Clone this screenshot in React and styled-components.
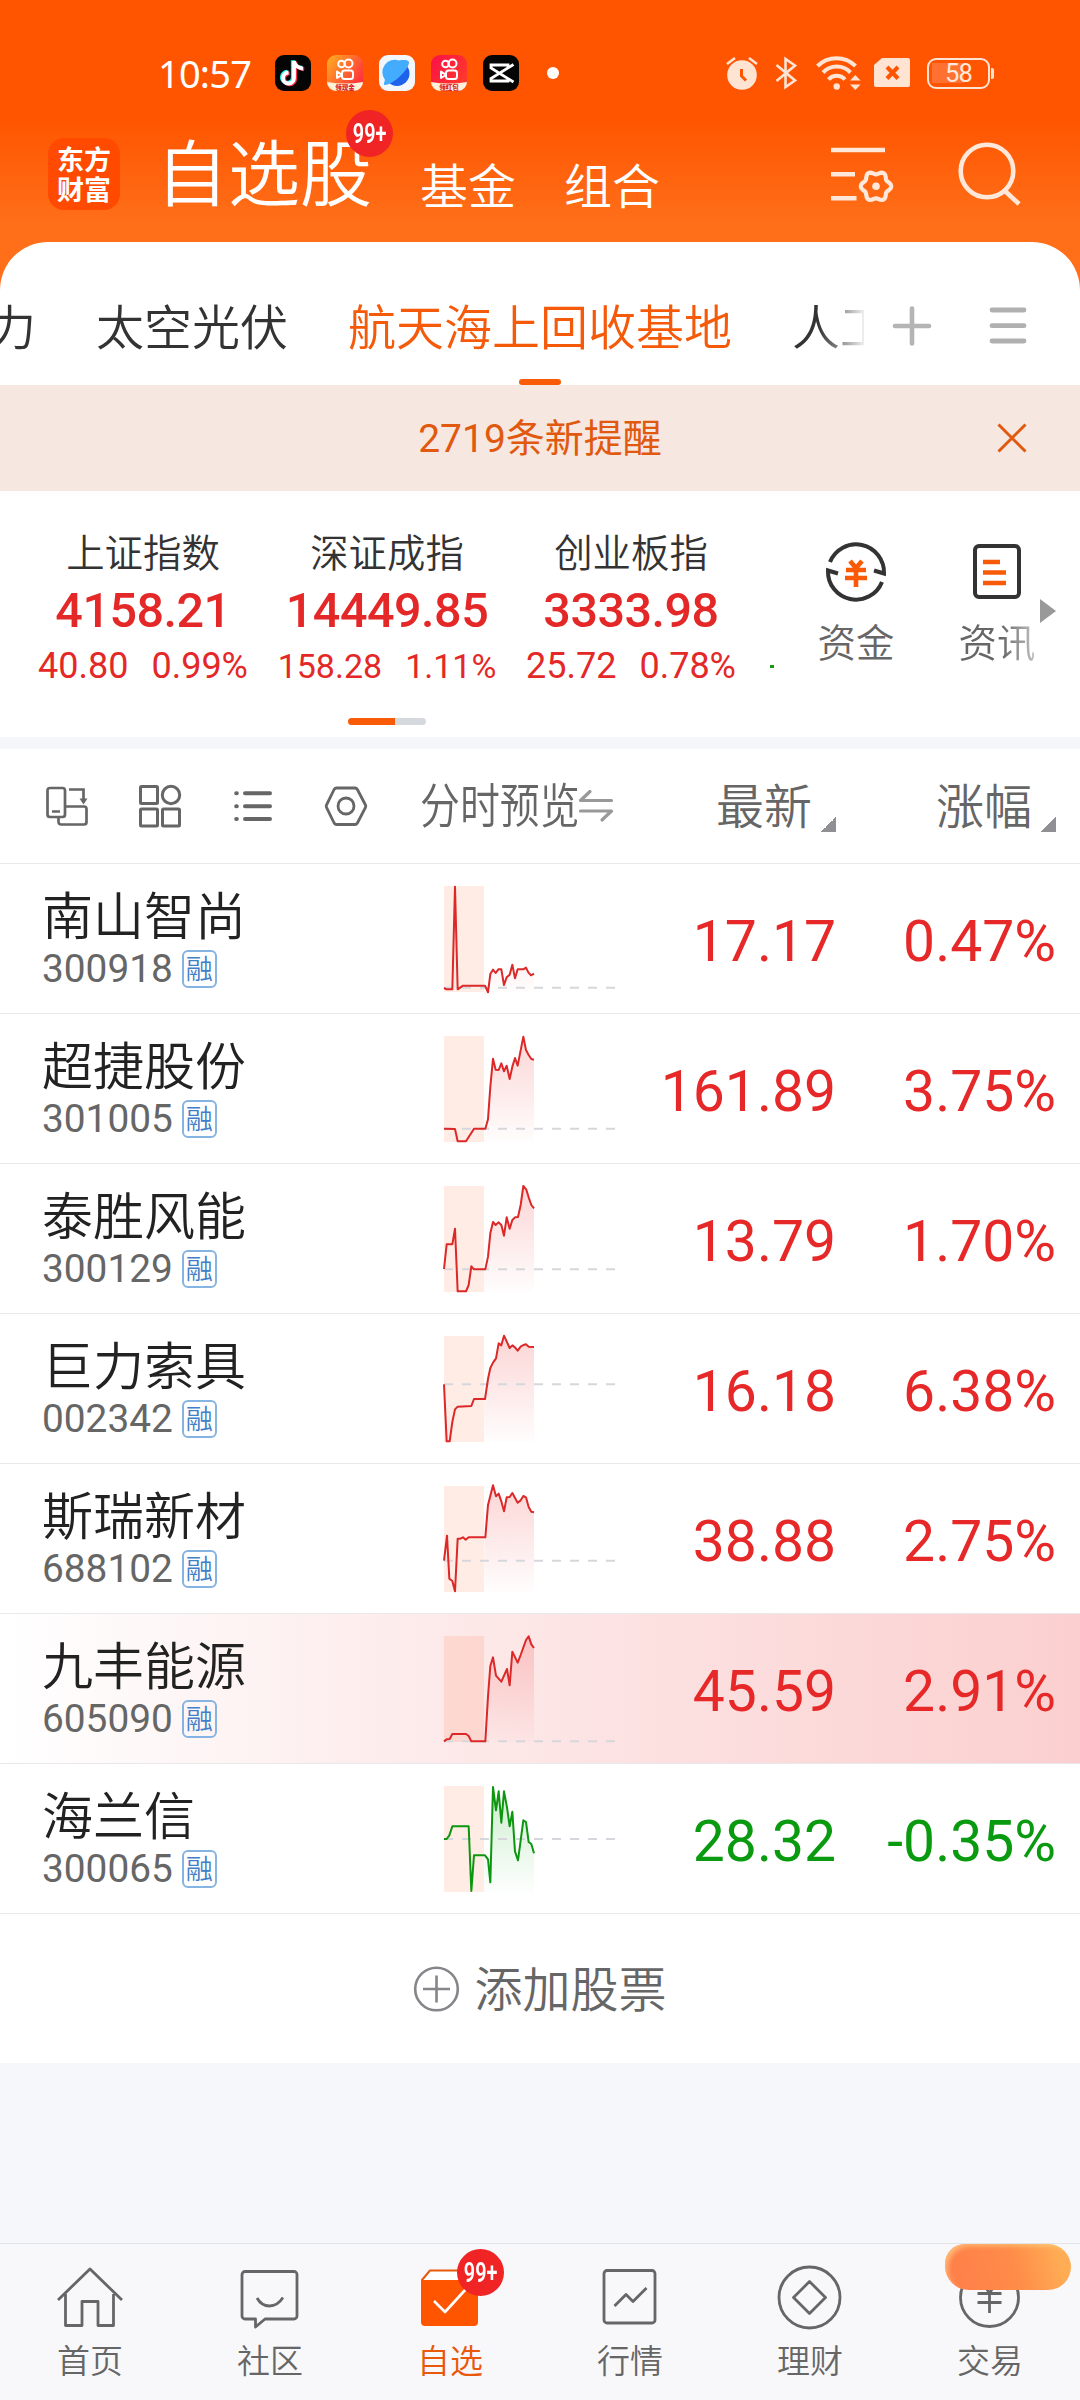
import React from 'react';
import styled, { createGlobalStyle, css } from 'styled-components';

const GlobalStyle = createGlobalStyle`
  * { box-sizing: border-box; }
  body { margin: 0; background: #f6f7fa; }
  svg { display: block; flex: none; overflow: visible; }
`;

const cjk = css`
  font-family: Roboto, "Noto Sans CJK SC", sans-serif;
  font-weight: 350;
`;

const Screen = styled.main`
  width: 1080px;
  height: 2400px;
  overflow: hidden;
  display: flex;
  flex-direction: column;
  background: #f6f7fa;
  font-family: Roboto, "Noto Sans CJK SC", sans-serif;
  color: #222;
  white-space: nowrap;
`;

const Top = styled.header`
  height: 385px;
  background: linear-gradient(#ff5500 0, #ff5500 118px, #ff6f1a 225px, #ff6f1a 100%);
`;

/* ---------- status bar ---------- */
const StatusBar = styled.div`
  height: 114px;
  padding: 32px 86px 0 158px;
  display: flex;
  align-items: center;
  color: #fff;
`;
const Clock = styled.span`
  width: 117px;
  font: 450 38px/40px "Noto Sans", sans-serif;
  letter-spacing: -0.8px;
`;
const AppIcons = styled.div`
  display: flex;
  gap: 16px;
`;
const Dot = styled.i`
  width: 12px;
  height: 12px;
  margin-left: 28px;
  border-radius: 50%;
  background: #fff;
`;
const StatusIcons = styled.div`
  margin-left: auto;
  display: flex;
  align-items: center;
`;
const Gap = styled.i`
  width: ${(p) => p.$w}px;
`;
const Battery = styled.div`
  width: 63px;
  height: 31px;
  padding: 3px;
  border: 2.5px solid #ffe3d3;
  border-radius: 9px;
  display: flex;
  justify-content: center;
  align-items: center;
  background: linear-gradient(#ff7130, #ff7130) 3px 3px / 32px 20px no-repeat;
  font: 400 25.5px/26px Roboto, sans-serif;
  letter-spacing: -0.8px;
  color: #ffe9dd;
`;
const BatteryTip = styled.i`
  width: 3px;
  height: 11px;
  margin-left: 1px;
  border-radius: 0 2px 2px 0;
  background: #ffe3d3;
`;

/* ---------- title row ---------- */
const TitleRow = styled.div`
  height: 128px;
  padding: 0 58px 0 48px;
  display: flex;
  align-items: flex-start;
  color: #fff;
`;
const Logo = styled.div`
  width: 72px;
  height: 72px;
  margin: 24px 36px 0 0;
  padding-top: 6px;
  border-radius: 16px;
  background: #ff4a00;
  text-align: center;
  font: 700 27px/29.5px "Noto Sans CJK SC", sans-serif;
`;
const MainTitle = styled.h1`
  ${cjk}
  position: relative;
  margin: 26px 48px 0 0;
  font-size: 72px;
  line-height: 72px;
`;
const TitleLink = styled.span`
  ${cjk}
  margin: 50px 48px 0 0;
  font-size: 48px;
  line-height: 48px;
`;
const Badge = styled.span`
  position: absolute;
  left: ${(p) => p.$x}px;
  top: ${(p) => p.$y}px;
  width: 47px;
  height: 47px;
  border-radius: 50%;
  background: #f02424;
  color: #fff;
  display: flex;
  align-items: center;
  justify-content: center;
  font: 600 28px/47px Roboto, sans-serif;
  & > b { font-weight: 600; transform: scaleX(0.71); }
`;
const TitleActions = styled.div`
  margin: 32px 0 0 auto;
  display: flex;
  gap: 63px;
`;

/* ---------- group tabs ---------- */
const TabSheet = styled.nav`
  height: 143px;
  border-radius: 48px 48px 0 0;
  background: #fff;
  display: flex;
`;
const TabScroller = styled.div`
  ${cjk}
  width: 864px;
  overflow: hidden;
  display: flex;
  gap: 60px;
  mask-image: linear-gradient(90deg, #000 818px, transparent 868px);
`;
const Tab = styled.div`
  flex: none;
  height: 143px;
  padding-top: 63px;
  display: flex;
  flex-direction: column;
  align-items: center;
  justify-content: space-between;
  font-size: 48px;
  line-height: 48px;
  color: ${(p) => (p.$active ? '#f55a0a' : '#333')};
  &:first-child { margin-left: -12px; }
`;
const TabMark = styled.i`
  width: 42px;
  height: 6px;
  border-radius: 3px;
  background: #f85a08;
`;
const TabTools = styled.div`
  padding: 63px 0 0 28px;
  display: flex;
  gap: 56px;
`;

/* ---------- notice ---------- */
const Notice = styled.div`
  height: 106px;
  padding: 0 52px;
  background: #f6e7e0;
  display: grid;
  grid-template-columns: 31px 1fr 31px;
  align-items: center;
  text-align: center;
  color: #e0590f;
  font-size: 39px;
  line-height: 50px;
  & > span { grid-column: 2; padding-top: 2px; }
`;

/* ---------- indices ---------- */
const IndexPanel = styled.section`
  height: 246px;
  background: #fff;
  display: flex;
`;
const IndexMain = styled.div`
  width: 775px;
  padding-left: 21px;
`;
const IndexList = styled.div`
  height: 227px;
  padding-top: 39px;
  display: flex;
  color: #e42828;
`;
const IndexCard = styled.div`
  width: 244px;
  display: flex;
  flex-direction: column;
  align-items: center;
`;
const IndexName = styled.div`
  ${cjk}
  height: 48px;
  font-size: 38.4px;
  line-height: 48px;
  color: #333;
`;
const IndexValue = styled.div`
  height: 65px;
  font: 500 48.5px/66px Roboto, sans-serif;
  letter-spacing: -0.5px;
`;
const IndexChange = styled.div`
  height: 44px;
  display: flex;
  gap: 23px;
  font: 400 ${(p) => p.$size}px/44px Roboto, sans-serif;
  padding-top: 1px;
`;
const NextMark = styled.i`
  width: 4px;
  height: 3px;
  margin: 135px 0 0 17px;
  background: #159a15;
`;
const Pager = styled.div`
  width: 78px;
  height: 7px;
  margin-left: 327px;
  border-radius: 4px;
  background: linear-gradient(90deg, #f85a08 47px, #d5d8dd 47px);
`;
const Shortcuts = styled.div`
  width: 265px;
  padding: 51px 0 0 25px;
  display: flex;
  overflow: hidden;
`;
const Shortcut = styled.div`
  ${cjk}
  width: 112px;
  flex: none;
  display: flex;
  flex-direction: column;
  align-items: center;
  gap: 18px;
  font-size: 38.4px;
  line-height: 48px;
  color: #666;
  & + & { margin-left: 29px; }
`;
const FadeLabel = styled.span`
  mask-image: ${(p) => (p.$fade ? 'linear-gradient(90deg, #000 55%, rgba(0,0,0,.4) 100%)' : 'none')};
`;
const NextArrow = styled.i`
  margin-top: 108px;
  border-left: 16px solid #999;
  border-top: 12px solid transparent;
  border-bottom: 12px solid transparent;
  height: 24px;
`;
const Divider = styled.div`
  height: 12px;
  background: #f5f6f9;
`;

/* ---------- table ---------- */
const TableHead = styled.div`
  ${cjk}
  height: 115px;
  padding: 0 24px 0 44px;
  border-bottom: 1px solid #e9e9eb;
  background: #fff;
  display: flex;
  align-items: center;
  font-size: 48px;
  line-height: 56px;
  color: #666;
`;
const ViewIcons = styled.div`
  width: 376px;
  display: flex;
  gap: 45px;
`;
const Preview = styled.div`
  width: 196px;
  display: flex;
  align-items: center;
`;
const PreviewText = styled.span`
  width: 159px;
  padding-top: 2px;
  & > span {
    display: inline-block;
    transform: scaleX(0.832);
    transform-origin: 0 50%;
  }
`;
const SortCell = styled.div`
  width: 220px;
  padding-top: 3px;
  display: flex;
  justify-content: flex-end;
  gap: 9px;
  &::after {
    content: '';
    align-self: flex-end;
    width: 15px;
    height: 15px;
    margin-bottom: 4px;
    background: linear-gradient(135deg, transparent 50%, #8f8f94 50%);
  }
`;
const Row = styled.div`
  height: 150px;
  padding: 0 24px 0 42px;
  border-bottom: 1px solid #e9e9eb;
  background: ${(p) => (p.$flash ? 'linear-gradient(90deg, #fff 0, #fdeaea 40%, #fbcfcf 100%)' : '#fff')};
  display: flex;
`;
const NameCell = styled.div`
  width: 402px;
  padding-top: 26px;
`;
const StockName = styled.div`
  ${cjk}
  height: 55px;
  font-size: 51px;
  line-height: 56px;
  color: #222;
`;
const CodeLine = styled.div`
  display: flex;
  align-items: center;
  gap: 9px;
  font: 400 38.8px/47px Roboto, sans-serif;
  color: #666;
`;
const MarginTag = styled.span`
  ${cjk}
  width: 35px;
  height: 38px;
  border: 2px solid #86b4e2;
  border-radius: 6px;
  font-size: 27px;
  line-height: 36px;
  color: #3f80c8;
  display: flex;
  justify-content: center;
`;
const Num = styled.div`
  width: 220px;
  padding-top: 3px;
  text-align: right;
  font: 400 57px/149px Roboto, sans-serif;
  color: ${(p) => (p.$down ? '#0a9a0f' : '#e62828')};
`;
const AddRow = styled.div`
  ${cjk}
  height: 149px;
  background: #fff;
  display: flex;
  align-items: center;
  justify-content: center;
  gap: 15px;
  font-size: 48px;
  line-height: 60px;
  color: #666;
  & > span { padding-top: 5px; }
`;

/* ---------- bottom navigation ---------- */
const BottomNav = styled.nav`
  height: 157px;
  margin-top: auto;
  border-top: 1px solid #e4e4e6;
  background: #f8f8fb;
  display: grid;
  grid-template-columns: repeat(6, 1fr);
`;
const NavItem = styled.div`
  ${cjk}
  position: relative;
  padding-top: 19px;
  display: flex;
  flex-direction: column;
  align-items: center;
  font-size: 33px;
  line-height: 40px;
  color: ${(p) => (p.$active ? '#e8590c' : '#666')};
  & > svg { margin-bottom: 9px; }
`;
const Promo = styled.i`
  position: absolute;
  left: 45px;
  top: 0;
  width: 126px;
  height: 46px;
  border-radius: 20px 23px 23px 24px;
  background: linear-gradient(75deg, #ff7f4a 5%, #ff8c48 55%, #ffad55 90%);
  box-shadow: inset 5px 4px 5px -2px rgba(255, 214, 140, 0.65);
`;

/* ---------- drawings ---------- */
const AppTile = ({ children, bg }) => (
  <svg width="36" height="36" viewBox="0 0 36 36">
    <rect width="36" height="36" rx="9" fill={bg} />
    {children}
  </svg>
);
const note = 'M19 6v17a5.500 5.500 0 1 1-5.500-5.500M19 6c.5 4 4 7 9 7.500';
const DouyinIcon = () => (
  <AppTile bg="#050505">
    <g fill="none" strokeWidth="3.800">
      <path d={note} stroke="#25f4ee" transform="translate(-1.200 -.8)" />
      <path d={note} stroke="#fe2c55" transform="translate(1.200 .8)" />
      <path d={note} stroke="#fff" />
    </g>
  </AppTile>
);
const KuaiIcon = ({ id, from, to, label }) => (
  <AppTile bg={`url(#${id})`}>
    <defs>
      <linearGradient id={id} x1="0" y1="0" x2="1" y2="0.700">
        <stop offset="0" stopColor={from} />
        <stop offset="1" stopColor={to} />
      </linearGradient>
    </defs>
    <g fill="none" stroke="#fff" strokeWidth="2">
      <circle cx="14.500" cy="9" r="3.300" />
      <circle cx="21.500" cy="8.500" r="4" />
      <rect x="15" y="15.500" width="11" height="8.500" rx="2.500" />
      <path d="M10 16.500v6.500l5-3.200z" strokeLinejoin="round" />
    </g>
    <path d="M0 27q18 3 36 0a9 9 0 0 1-9 9H9a9 9 0 0 1-9-9z" fill="#fff0d8" />
    <text x="18" y="34.500" fontSize="6.500" fontWeight="900" textAnchor="middle" fill="#d8232a" fontFamily="Noto Sans CJK SC">{label}</text>
  </AppTile>
);
const PlanetIcon = () => (
  <AppTile bg="#f3f7fb">
    <circle cx="18" cy="18.500" r="12.500" fill="#1e62ec" />
    <path d="M6 25a12.500 12.500 0 0 1 14-19.500c5-1 9.500-.500 10 1.500.6 4-7 14-15 19-5 3.500-9.500 5-10 3.500-.4-1 .3-2.500 1-4.500z" fill="#44acff" />
  </AppTile>
);
const CapCutIcon = () => (
  <AppTile bg="#050505">
    <path d="M30.500 9.500 8 23.500V26h17v-3M30.500 27 8 13V10h17v3" fill="none" stroke="#fff" strokeWidth="2.800" />
  </AppTile>
);
const AlarmIcon = () => (
  <svg width="32" height="34" viewBox="0 0 32 34">
    <circle cx="16" cy="19" r="14.800" fill="#ffe3d3" />
    <path d="M1 8l8-6M31 8l-8-6" stroke="#ffe3d3" strokeWidth="2.600" />
    <path d="M15.500 13v7l4.500 4.500" fill="none" stroke="#ff5500" strokeWidth="3" />
  </svg>
);
const BluetoothIcon = () => (
  <svg width="22" height="34" viewBox="0 0 22 34" fill="none" stroke="#ffe3d3" strokeWidth="2.600">
    <path d="M.5 9 19 24.500 9.500 31V3L19 9.500.5 25" />
  </svg>
);
const WifiIcon = () => (
  <svg width="45" height="36" viewBox="0 0 45 36">
    <g fill="none" stroke="#ffe3d3" strokeWidth="4">
      <path d="M1.500 11a27 27 0 0 1 38 0" />
      <path d="M7 17.500a19 19 0 0 1 27.500 0" />
      <path d="M12.500 24.500a11 11 0 0 1 16.500 0" />
    </g>
    <circle cx="20.700" cy="31.500" r="3.200" fill="#ffe3d3" />
    <path d="M34 25.500h10.500l-5.200-5.500zM34 29.500h10.500l-5.200 5.500z" fill="#ffe3d3" />
  </svg>
);
const SimIcon = () => (
  <svg width="36" height="30" viewBox="0 0 36 30">
    <path d="M8 0h26a2 2 0 0 1 2 2v25a2 2 0 0 1-2 2H2a2 2 0 0 1-2-2V7z" fill="#ffe3d3" />
    <path d="m13 9 11 11.500M24 9 13 20.500" stroke="#ff5500" strokeWidth="4" />
  </svg>
);
const gearPoints = Array.from({ length: 96 }, (_, i) => {
  const a = (i / 96) * Math.PI * 2;
  const r = 13.6 + 1.6 * Math.cos(6 * a);
  return `${(45 + r * Math.cos(a)).toFixed(2)},${(40.3 + r * Math.sin(a)).toFixed(2)}`;
}).join(' ');
const FilterIcon = () => (
  <svg width="64" height="64" viewBox="0 0 64 64" fill="none" stroke="#ffe8da" strokeWidth="4.600">
    <path d="M0 4h54M0 28.300h24M0 52.300h25.500" />
    <polygon points={gearPoints} strokeWidth="4.200" strokeLinejoin="round" />
    <circle cx="45" cy="40.300" r="3.800" fill="#ffe8da" stroke="none" />
  </svg>
);
const SearchIcon = () => (
  <svg width="64" height="64" viewBox="0 0 64 64" fill="none" stroke="#ffe8da" strokeWidth="4.600">
    <circle cx="29" cy="25" r="26.300" />
    <path d="m47 45 14 13" />
  </svg>
);
const PlusIcon = () => (
  <svg width="40" height="42" viewBox="0 0 40 42" stroke="#b4b4b4" strokeWidth="4.600" strokeLinecap="round">
    <path d="M3 21h34M20 3.500v35" />
  </svg>
);
const MenuIcon = () => (
  <svg width="40" height="42" viewBox="0 0 40 42" stroke="#b0b0b0" strokeWidth="4.800" strokeLinecap="round">
    <path d="M4 5h32M4 20.700h32M4 36h32" />
  </svg>
);
const CloseIcon = () => (
  <svg width="31" height="31" viewBox="0 0 31 31" stroke="#e0590f" strokeWidth="3">
    <path d="m1.500 1.500 27 27M28.500 1.500l-27 27" />
  </svg>
);
const FundIcon = () => (
  <svg width="60" height="60" viewBox="0 0 60 60" fill="none" stroke="#333" strokeWidth="4">
    <path d="M4 20a28 28 0 0 1 54 11.500l-10-3M56 40A28 28 0 0 1 2 28.500l10 3" />
    <path d="m24 19 6 7 6-7M20 28h20M19 36h22M30 26v19" stroke="#f85a08" strokeWidth="4.600" />
  </svg>
);
const NewsIcon = () => (
  <svg width="48" height="60" viewBox="0 0 48 60" fill="none" stroke="#333" strokeWidth="4">
    <rect x="2" y="4" width="44" height="51" rx="4" />
    <path d="M10 20h17M10 30.500h23M10 41h23" stroke="#f85a08" strokeWidth="4.600" />
  </svg>
);
const RotateIcon = () => (
  <svg width="48" height="44" viewBox="0 0 48 44" fill="none" stroke="#666" strokeWidth="2.700">
    <rect x="3.500" y="4" width="17.500" height="29" rx="2.500" />
    <path d="M8 27.500h8M25 5.500h14.500v10M21 22.500h19a2.500 2.500 0 0 1 2.500 2.500v13a2.500 2.500 0 0 1-2.500 2.500H17a2.500 2.500 0 0 1-2.500-2.500v-5" />
    <path d="M35.500 14.500h8l-4 6z" fill="#666" stroke="none" />
  </svg>
);
const GridIcon = () => (
  <svg width="48" height="44" viewBox="0 0 48 44" fill="none" stroke="#666" strokeWidth="3">
    <rect x="3.500" y="2.500" width="17" height="17" rx="1" />
    <circle cx="34" cy="11" r="8.700" />
    <rect x="3.500" y="25" width="17" height="17" rx="1" />
    <rect x="25.500" y="25" width="17" height="17" rx="1" />
  </svg>
);
const ListIcon = () => (
  <svg width="48" height="44" viewBox="0 0 48 44" fill="none" stroke="#666" strokeWidth="4" strokeLinecap="round">
    <path d="M15 9.200h25M15 22.200h25M15 35h25M6.200 9.200h.6M6.200 22.200h.6M6.200 35h.6" />
  </svg>
);
const NutIcon = () => (
  <svg width="48" height="44" viewBox="0 0 48 44" fill="none" stroke="#666" strokeWidth="2.800" strokeLinejoin="round">
    <path d="M13.500 4H32q1.500 0 2.400 1.500L42.500 21q.6 1.200 0 2.400L34.400 39q-.9 1.500-2.400 1.500H13.500q-1.500 0-2.400-1.500L3.500 23.400q-.6-1.200 0-2.400L11.100 5.500Q12 4 13.500 4z" />
    <circle cx="23" cy="22" r="8" />
  </svg>
);
const SwapIcon = () => (
  <svg width="35" height="34" viewBox="0 0 35 34" fill="none" stroke="#999" strokeWidth="3.200" strokeLinecap="round" strokeLinejoin="round">
    <path d="M11 2.500 1.500 11.500h31M23 31l9.500-9H1.500" />
  </svg>
);
const CirclePlus = () => (
  <svg width="46" height="46" viewBox="0 0 46 46" fill="none" stroke="#85858a" strokeWidth="2.600">
    <circle cx="23.500" cy="23" r="21.300" />
    <path d="M10 23h27M23.500 9.500v27" />
  </svg>
);
const NavSvg = ({ children }) => (
  <svg width="70" height="70" viewBox="0 0 70 70" fill="none" stroke="#666" strokeWidth="2.800" strokeLinejoin="round">
    {children}
  </svg>
);
const HomeIcon = () => (
  <NavSvg>
    <path d="M3 37 35 6l32 31M10.500 31v31.500H27v-24h16v24h15.500V31" />
  </NavSvg>
);
const ChatIcon = () => (
  <NavSvg>
    <path d="M10 8.500h49a3 3 0 0 1 3 3V53a3 3 0 0 1-3 3H30l-9.500 8V56H10a3 3 0 0 1-3-3V11.500a3 3 0 0 1 3-3zM22 35q4.500 8 12.500 8T48 34.500" />
  </NavSvg>
);
const PickIcon = () => (
  <NavSvg>
    <path d="M7 17 15 7.500h47V18H7z" fill="#fff" stroke="#e8590c" strokeWidth="2" />
    <path d="M6 17h57v42a4 4 0 0 1-4 4H10a4 4 0 0 1-4-4z" fill="#ff5500" stroke="none" />
    <path d="m19 38 11 11 21-23" stroke="#fff" strokeWidth="2.600" />
  </NavSvg>
);
const MarketIcon = () => (
  <NavSvg>
    <rect x="9" y="7.500" width="51" height="52.500" rx="3" />
    <path d="m19.500 43 11.500-11.500 7 7L51.500 25" />
  </NavSvg>
);
const WealthIcon = () => (
  <NavSvg>
    <circle cx="34.500" cy="34.500" r="30.500" />
    <path d="m34.500 18.500 16 16-16 16-16-16z" />
  </NavSvg>
);
const TradeIcon = () => (
  <NavSvg>
    <circle cx="34.500" cy="34.500" r="29" />
    <path d="M22.500 30.500h24M22.500 39.500h24M34.500 30v20M27.500 20l7 10 7-10" />
  </NavSvg>
);

const Spark = ({ id, points, base, down }) => {
  const color = down ? '#0d960f' : '#dc2828';
  const fill = down ? '#18b020' : '#f04040';
  return (
    <svg width="172" height="149" viewBox="0 3 516 447">
      <defs>
        <linearGradient id={`fade-${id}`} x1="0" y1="69" x2="0" y2="387" gradientUnits="userSpaceOnUse">
          <stop offset="0" stopColor={fill} stopOpacity="0.22" />
          <stop offset="1" stopColor={fill} stopOpacity="0.01" />
        </linearGradient>
        <clipPath id={`clip-${id}`}>
          <rect x="121" y="0" width="150" height="387" />
        </clipPath>
      </defs>
      <rect x="0" y="69" width="120" height="318" fill="#ff6420" fillOpacity="0.12" />
      <polygon points={`0,387 ${points} 270,387`} fill={`url(#fade-${id})`} clipPath={`url(#clip-${id})`} />
      <path d={`M0 ${base}H516`} stroke="#d6d7dc" strokeWidth="6" strokeDasharray="27 27" />
      <polyline points={points} fill="none" stroke={color} strokeWidth="6" strokeLinejoin="round" />
    </svg>
  );
};

/* ---------- data ---------- */
const indices = [
  { name: '上证指数', value: '4158.21', diff: '40.80', pct: '0.99%', size: 36 },
  { name: '深证成指', value: '14449.85', diff: '158.28', pct: '1.11%', size: 34 },
  { name: '创业板指', value: '3333.98', diff: '25.72', pct: '0.78%', size: 36 },
];

const stocks = [
  { name: '南山智尚', code: '300918', price: '17.17', pct: '0.47%', base: 374, points: '0,375 8,379 25,379 33,71 41,379 57,368 123,368 132,388 139,333 147,320 155,330 163,319 172,319 180,366 188,343 197,335 205,305 213,346 221,319 238,319 246,314 253,328 261,337 270,332' },
  { name: '超捷股份', code: '301005', price: '161.89', pct: '3.75%', base: 347, points: '0,347 33,348 41,385 66,385 90,347 124,347 132,319 139,221 147,137 155,170 164,171 172,151 180,175 188,158 197,198 205,161 213,135 221,158 238,71 246,111 254,126 262,138 270,140' },
  { name: '泰胜风能', code: '300129', price: '13.79', pct: '1.70%', base: 319, points: '0,318 8,244 25,244 33,197 41,385 66,385 74,366 82,310 90,319 124,319 132,281 139,211 147,177 155,186 164,178 172,186 180,218 188,163 197,197 205,171 213,163 222,162 230,126 238,69 247,80 254,103 262,126 270,136' },
  { name: '巨力索具', code: '002342', price: '16.18', pct: '6.38%', base: 214, points: '0,214 8,385 17,385 25,327 33,289 41,281 82,279 90,258 123,258 132,198 139,165 147,149 156,136 164,91 172,97 180,68 188,85 197,105 205,97 213,103 221,113 230,101 238,96 246,94 254,101 270,102' },
  { name: '斯瑞新材', code: '688102', price: '38.88', pct: '2.75%', base: 293, points: '0,293 9,218 16,347 25,354 33,385 41,227 49,227 57,223 65,230 74,223 124,223 132,126 147,67 156,100 164,92 172,115 180,145 188,103 197,102 205,90 221,119 229,113 238,99 246,103 254,132 262,146 270,148' },
  { name: '九丰能源', code: '605090', price: '45.59', pct: '2.91%', base: 385, flash: true, points: '0,385 8,379 17,378 25,363 66,363 74,369 82,385 124,385 132,250 139,159 147,133 156,188 172,206 189,168 197,217 205,116 221,149 230,126 246,81 254,70 262,94 270,105' },
  { name: '海兰信', code: '300065', price: '28.32', pct: '-0.35%', base: 228, down: true, points: '0,228 8,228 16,217 25,190 74,190 82,384 90,277 123,277 132,289 139,358 147,72 156,142 164,85 172,179 180,85 189,133 197,190 205,146 213,265 222,292 238,172 246,177 254,237 262,243 270,271' },
];

const navItems = [
  { label: '首页', Icon: HomeIcon },
  { label: '社区', Icon: ChatIcon },
  { label: '自选', Icon: PickIcon, active: true },
  { label: '行情', Icon: MarketIcon },
  { label: '理财', Icon: WealthIcon },
  { label: '交易', Icon: TradeIcon, promo: true },
];

export default function App() {
  return (
    <Screen>
      <GlobalStyle />
      <Top>
        <StatusBar>
          <Clock>10:57</Clock>
          <AppIcons>
            <DouyinIcon />
            <KuaiIcon id="kuai-a" from="#ffb020" to="#ff2f3c" label="领现金" />
            <PlanetIcon />
            <KuaiIcon id="kuai-b" from="#fb1048" to="#ff3a2c" label="领红包" />
            <CapCutIcon />
          </AppIcons>
          <Dot />
          <StatusIcons>
            <AlarmIcon />
            <Gap $w={18} />
            <BluetoothIcon />
            <Gap $w={18} />
            <WifiIcon />
            <Gap $w={13} />
            <SimIcon />
            <Gap $w={17} />
            <Battery>58</Battery>
            <BatteryTip />
          </StatusIcons>
        </StatusBar>
        <TitleRow>
          <Logo>东方<br />财富</Logo>
          <MainTitle>
            自选股
            <Badge $x={190} $y={-30}><b>99+</b></Badge>
          </MainTitle>
          <TitleLink>基金</TitleLink>
          <TitleLink>组合</TitleLink>
          <TitleActions>
            <FilterIcon />
            <SearchIcon />
          </TitleActions>
        </TitleRow>
        <TabSheet>
          <TabScroller>
            <Tab>力</Tab>
            <Tab>太空光伏</Tab>
            <Tab $active>航天海上回收基地<TabMark /></Tab>
            <Tab>人工</Tab>
          </TabScroller>
          <TabTools>
            <PlusIcon />
            <MenuIcon />
          </TabTools>
        </TabSheet>
      </Top>

      <Notice>
        <span>2719条新提醒</span>
        <CloseIcon />
      </Notice>

      <IndexPanel>
        <IndexMain>
          <IndexList>
            {indices.map((x) => (
              <IndexCard key={x.name}>
                <IndexName>{x.name}</IndexName>
                <IndexValue>{x.value}</IndexValue>
                <IndexChange $size={x.size}>
                  <span>{x.diff}</span>
                  <span>{x.pct}</span>
                </IndexChange>
              </IndexCard>
            ))}
            <NextMark />
          </IndexList>
          <Pager />
        </IndexMain>
        <Shortcuts>
          <Shortcut>
            <FundIcon />
            <FadeLabel>资金</FadeLabel>
          </Shortcut>
          <Shortcut>
            <NewsIcon />
            <FadeLabel $fade>资讯</FadeLabel>
          </Shortcut>
        </Shortcuts>
        <NextArrow />
      </IndexPanel>
      <Divider />

      <TableHead>
        <ViewIcons>
          <RotateIcon />
          <GridIcon />
          <ListIcon />
          <NutIcon />
        </ViewIcons>
        <Preview>
          <PreviewText><span>分时预览</span></PreviewText>
          <SwapIcon />
        </Preview>
        <SortCell>最新</SortCell>
        <SortCell>涨幅</SortCell>
      </TableHead>

      {stocks.map((s) => (
        <Row key={s.code} $flash={s.flash}>
          <NameCell>
            <StockName>{s.name}</StockName>
            <CodeLine>
              {s.code}
              <MarginTag>融</MarginTag>
            </CodeLine>
          </NameCell>
          <Spark id={s.code} points={s.points} base={s.base} down={s.down} />
          <Num $down={s.down}>{s.price}</Num>
          <Num $down={s.down}>{s.pct}</Num>
        </Row>
      ))}

      <AddRow>
        <CirclePlus />
        <span>添加股票</span>
      </AddRow>

      <BottomNav>
        {navItems.map(({ label, Icon, active, promo }) => (
          <NavItem key={label} $active={active}>
            <Icon />
            {label}
            {active && <Badge $x={97} $y={5}><b>99+</b></Badge>}
            {promo && <Promo />}
          </NavItem>
        ))}
      </BottomNav>
    </Screen>
  );
}
